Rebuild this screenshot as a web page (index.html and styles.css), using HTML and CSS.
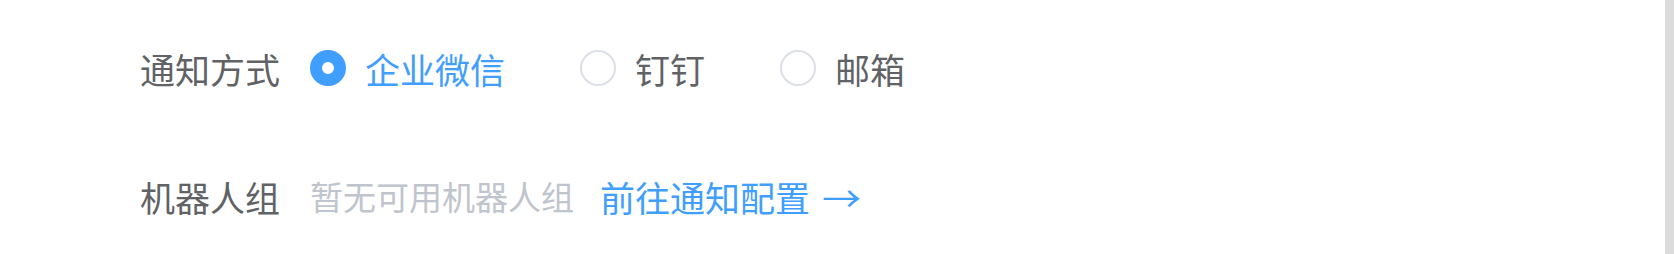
FILE: index.html
```html
<!DOCTYPE html>
<html lang="zh-CN">
<head>
<meta charset="utf-8">
<link rel="stylesheet" href="styles.css">
</head>
<body>
<div class="page">
  <div class="content">
    <div class="form-item first">
      <div class="label">通知方式</div>
      <div class="radio-group">
        <label class="radio checked"><span class="circle"></span><span class="radio-text">企业微信</span></label>
        <label class="radio"><span class="circle"></span><span class="radio-text">钉钉</span></label>
        <label class="radio"><span class="circle"></span><span class="radio-text">邮箱</span></label>
      </div>
    </div>
    <div class="form-item second">
      <div class="label">机器人组</div>
      <span class="placeholder">暂无可用机器人组</span>
      <a class="link">前往通知配置<span class="arrow">→</span></a>
    </div>
  </div>
  <div class="scrollbar"></div>
</div>
</body>
</html>
```
FILE: styles.css
```css
html, body {
  margin: 0;
  padding: 0;
  background: #ffffff;
}
body {
  font-family: "Noto Sans CJK SC", "Noto Sans", sans-serif;
}
.page {
  display: flex;
  height: 254px;
  width: 1674px;
}
.content {
  flex: 1;
  padding-left: 140px;
  padding-top: 33px;
}
.scrollbar {
  width: 9px;
  background: #dcdcdc;
}
.form-item {
  display: flex;
  align-items: center;
  height: 70px;
}
.form-item.second {
  margin-top: 58px;
}
.label {
  font-size: 35px;
  color: #606266;
  margin-right: 30px;
  line-height: 1;
}
.radio-group {
  display: flex;
  align-items: center;
}
.radio {
  display: flex;
  align-items: center;
  margin-right: 75px;
}
.circle {
  box-sizing: border-box;
  width: 36px;
  height: 36px;
  border-radius: 50%;
  border: 2.5px solid #dcdfe6;
  background: #ffffff;
  margin-right: 19px;
}
.radio.checked .circle {
  border: 12.5px solid #409eff;
  background: #ffffff;
}
.radio-text {
  font-size: 35px;
  line-height: 1;
  color: #606266;
}
.radio.checked .radio-text {
  color: #409eff;
}
.placeholder {
  font-size: 33px;
  line-height: 1;
  color: #c0c4cc;
  margin-right: 26px;
}
.link {
  display: flex;
  align-items: center;
  font-size: 35px;
  line-height: 1;
  color: #409eff;
  text-decoration: none;
}
.arrow {
  display: inline-block;
  margin-left: 12px;
  transform: scaleX(1.12);
  transform-origin: left center;
}
```
